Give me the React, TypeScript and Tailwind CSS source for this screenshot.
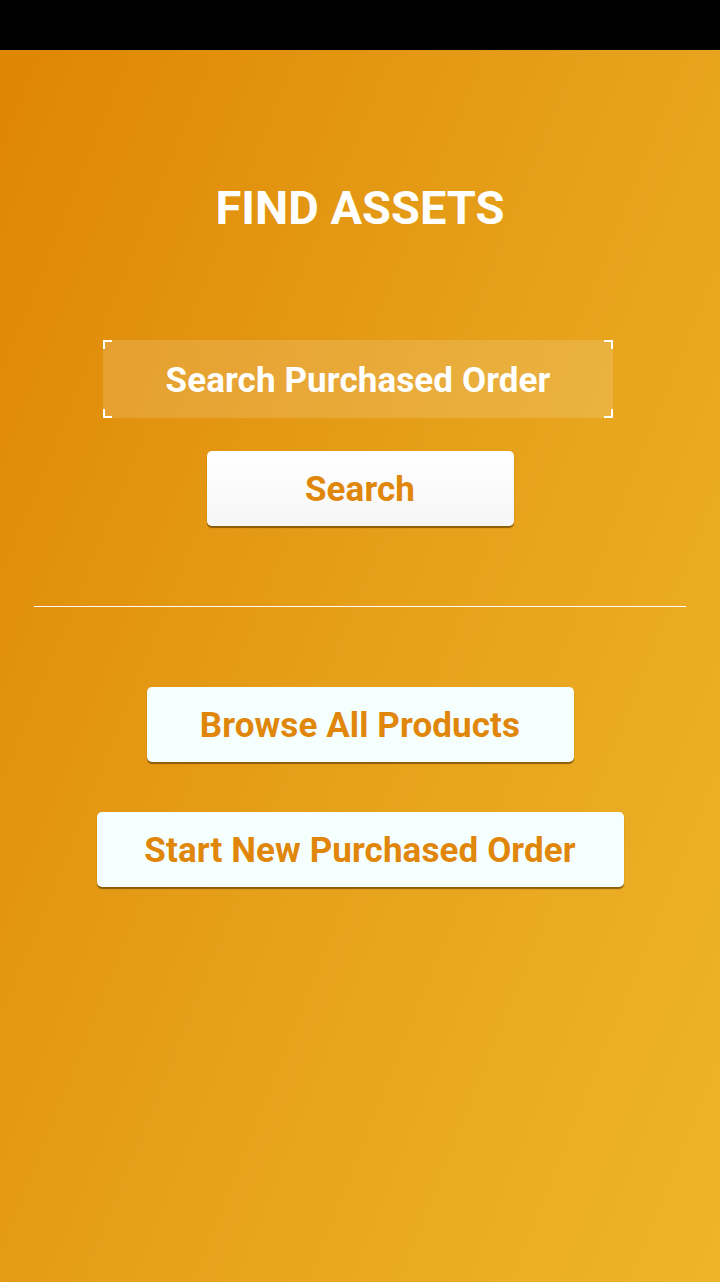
import React from "react";

function Corner({ className }: { className: string }) {
  return <span className={`absolute w-[9px] h-[9px] border-white ${className}`} />;
}

function ActionButton({ label, width, bg }: { label: string; width: string; bg: string }) {
  return (
    <button
      className={`${width} ${bg} h-[75px] pt-[4px] rounded-[5px] shadow-[0_2px_1px_rgba(110,70,0,0.75)] text-[#e0870b] text-[35px] font-bold tracking-[0.1px]`}
    >
      {label}
    </button>
  );
}

export default function App() {
  return (
    <div className="w-[720px] h-[1282px] flex flex-col font-['Roboto',sans-serif]">
      <div className="h-[50px] bg-black shrink-0" />
      <div className="flex-1 flex flex-col items-center bg-[linear-gradient(112deg,#df8604_0%,#e6a01a_50%,#eeb52a_100%)]">
        <h1 className="mt-[129px] text-white text-[47px] font-bold leading-[58px]">
          FIND ASSETS
        </h1>

        <div className="relative mt-[103px] mr-[4px] w-[510px] h-[78px] pt-[4px] bg-white/15 flex items-center justify-center">
          <Corner className="top-0 left-0 border-t-2 border-l-2" />
          <Corner className="top-0 right-0 border-t-2 border-r-2" />
          <Corner className="bottom-0 left-0 border-b-2 border-l-2" />
          <Corner className="bottom-0 right-0 border-b-2 border-r-2" />
          <span className="text-white text-[35px] font-bold tracking-[0.1px]">Search Purchased Order</span>
        </div>

        <div className="mt-[33px]">
          <ActionButton label="Search" width="w-[307px]" bg="bg-[linear-gradient(#ffffff,#f6f6f6)]" />
        </div>

        <div className="mt-[80px] w-[652px] h-px bg-white" />

        <div className="mt-[80px]">
          <ActionButton label="Browse All Products" width="w-[427px]" bg="bg-[#f5fffd]" />
        </div>
        <div className="mt-[50px]">
          <ActionButton label="Start New Purchased Order" width="w-[527px]" bg="bg-[#f5fffd]" />
        </div>
      </div>
    </div>
  );
}
